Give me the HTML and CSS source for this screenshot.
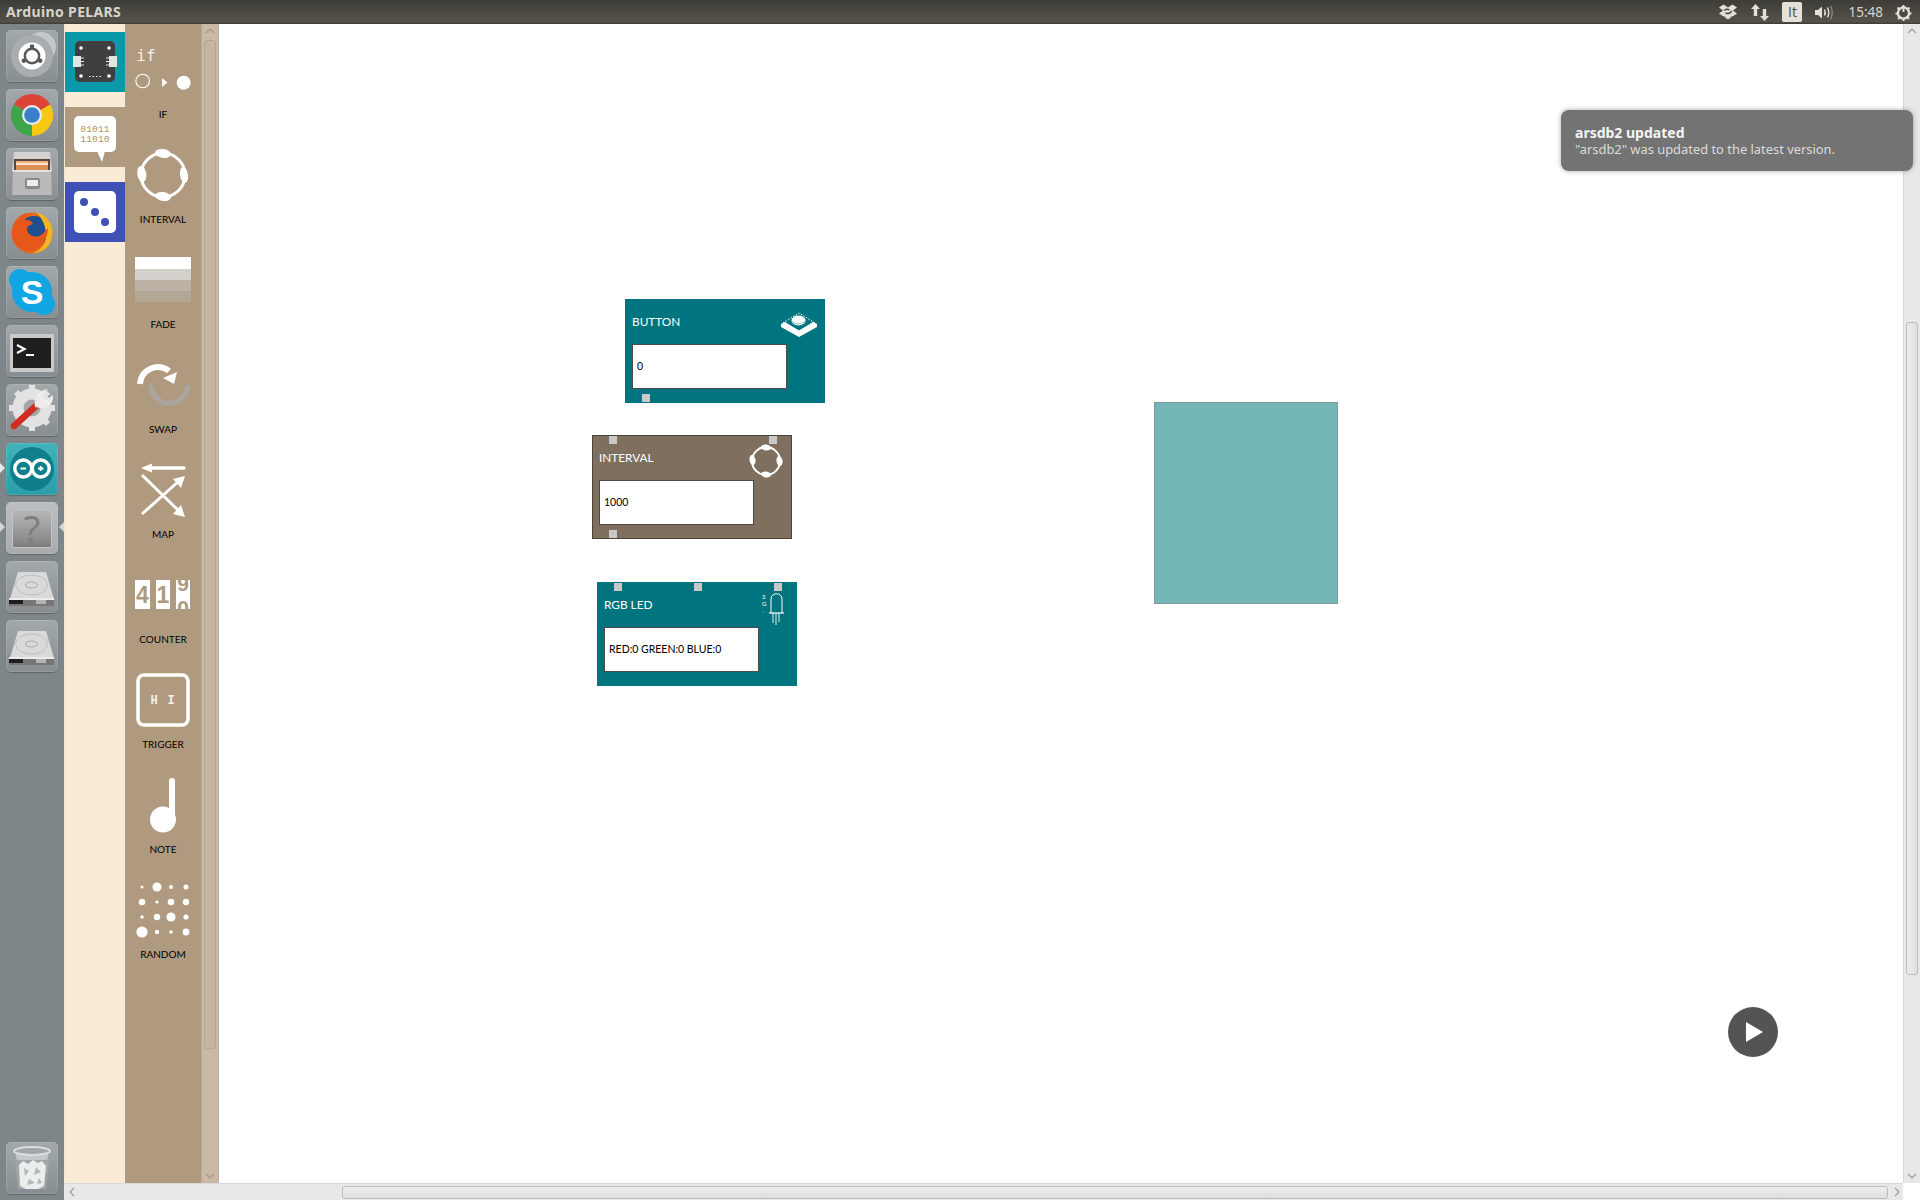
FILE: index.html
```html
<!DOCTYPE html>
<html lang="en">
<head>
<meta charset="utf-8">
<title>Arduino PELARS</title>
<link rel="stylesheet" href="styles.css">
</head>
<body>
<div class="screen">
  <header class="topbar">
    <span class="window-title">Arduino PELARS</span>
    <div class="indicators">
      <svg class="ind ind-dropbox" width="18" height="16" viewBox="0 0 18 16"><path d="M4.5 0.5 9 3.5 13.5 0.5 18 3.5 14 6.5 18 9.5 13.5 12.5 12.5 11.8V13L9 15.5 5.5 13V11.8L4.5 12.5 0 9.5 4 6.5 0 3.5Z" fill="#e4e0d8"/><path d="M5 6.5C7 5 9 5 10.5 6M13 7C11 9.5 8.5 10 6.5 9" stroke="#4a4843" stroke-width="1.4" fill="none"/></svg>
      <svg class="ind ind-net" width="18" height="17" viewBox="0 0 18 17"><path d="M4.5 0 9 5H6.2V12H2.8V5H0Z" fill="#e4e0d8"/><path d="M13.5 17 18 12H15.2V5H11.8V12H9Z" fill="#e4e0d8"/></svg>
      <span class="ind-kbd">It</span>
      <svg class="ind ind-vol" width="20" height="15" viewBox="0 0 20 15"><path d="M0 5H3L7 1.5V13.5L3 10H0Z" fill="#e4e0d8"/><path d="M9.5 4.5Q11 7.5 9.5 10.5" stroke="#e4e0d8" stroke-width="1.5" fill="none"/><path d="M12.5 2.5Q15 7.5 12.5 12.5" stroke="#e4e0d8" stroke-width="1.4" fill="none"/><path d="M15.5 0.8Q19 7.5 15.5 14.2" stroke="#8b8880" stroke-width="1.3" fill="none"/></svg>
      <span class="clock">15:48</span>
      <svg class="ind ind-power" width="17" height="17" viewBox="0 0 17 17"><circle cx="8.5" cy="9" r="5.6" fill="none" stroke="#e4e0d8" stroke-width="2.4"/><path d="M8.5 1V8" stroke="#e4e0d8" stroke-width="2"/><path d="M2.5 3.5 4.2 5.2M14.5 3.5 12.8 5.2M0.5 9.5H2.5M14.5 9.5H16.5M3 15 4.5 13.5M14 15 12.5 13.5M8.5 15V17" stroke="#e4e0d8" stroke-width="2"/></svg>
    </div>
  </header>

  <div class="workspace">
    <nav class="dock">
      <div class="dock-tile">
        <svg viewBox="0 0 52 52" class="dock-icon"><circle cx="26" cy="26" r="21" fill="#a9adb0"/><path d="M26 5A21 21 0 0 1 47 26 15 15 0 0 0 26 5Z" fill="#c4c8ca"/><path d="M26 47A21 21 0 0 1 8 37 20 20 0 0 0 26 47Z" fill="#c4c8ca"/><circle cx="26" cy="26" r="13.500" fill="#fff"/><circle cx="26" cy="26" r="7.200" fill="none" stroke="#555" stroke-width="2.400"/><path d="M26 18V14M19 30 15.500 32.500M33 30 36.500 32.500" stroke="#fff" stroke-width="2.400"/><circle cx="26" cy="16.500" r="2.200" fill="#555"/><circle cx="17.800" cy="30.700" r="2.200" fill="#555"/><circle cx="34.200" cy="30.700" r="2.200" fill="#555"/></svg>
      </div>
      <div class="dock-tile">
        <svg viewBox="0 0 52 52" class="dock-icon"><path d="M26 26 7.800 15.500A21 21 0 0 1 44.200 15.500Z" fill="#dd4438"/><path d="M26 26 44.200 15.500A21 21 0 0 1 26 47Z" fill="#f6c813"/><path d="M26 26 26 47A21 21 0 0 1 7.800 15.500Z" fill="#3ea54a"/><circle cx="26" cy="26" r="10" fill="#e6eef5"/><circle cx="26" cy="26" r="7.800" fill="#3b7fc9"/></svg>
      </div>
      <div class="dock-tile">
        <svg viewBox="0 0 52 52" class="dock-icon"><path d="M8 4H44L46 23H6Z" fill="#d2d2d2"/><rect x="8" y="11" width="36" height="12" fill="#57463a"/><rect x="10" y="13" width="32" height="2" fill="#eab07e"/><rect x="10" y="15" width="32" height="2" fill="#fbe6ce"/><rect x="10" y="17" width="32" height="5" fill="#d98f55"/><path d="M7 22H45L46 47H6Z" fill="#b9b9b9"/><path d="M7 22H45V24H7Z" fill="#e2e2e2"/><rect x="19" y="30" width="15" height="11" rx="2" fill="#8a8a8a"/><rect x="21" y="32" width="11" height="6" fill="#ececec"/></svg>
      </div>
      <div class="dock-tile">
        <svg viewBox="0 0 52 52" class="dock-icon"><circle cx="26" cy="26" r="20.500" fill="#e56a1b"/><circle cx="28" cy="24" r="15" fill="#1e4f8e"/><path d="M30 5C40 8 49 17 46 30 44 41 35 46 26 46.500 35 44 41 36 40 26 39 16 35 10 30 5Z" fill="#f7b521"/><path d="M6 24C7 14 14 6 24 6 20 8 18 11 18 13 22 12 26 14 27 17 24 18 21 19 21 22 21 27 27 31 33 29 38 27 40 23 42 21 42 33 33 45 21 44 11 42 5 34 6 24Z" fill="#e8571a"/></svg>
      </div>
      <div class="dock-tile">
        <svg viewBox="0 0 52 52" class="dock-icon"><circle cx="26" cy="26" r="20" fill="#12a5e4"/><circle cx="14" cy="14" r="11" fill="#12a5e4"/><circle cx="38" cy="38" r="11" fill="#12a5e4"/><text x="26" y="38" text-anchor="middle" class="skype-s">S</text></svg>
      </div>
      <div class="dock-tile">
        <svg viewBox="0 0 52 52" class="dock-icon"><rect x="4" y="9" width="44" height="38" fill="#c9c9c9"/><rect x="7" y="13" width="38" height="30" fill="#1f1f1f"/><path d="M11 20 18.500 24 11 28" fill="none" stroke="#fff" stroke-width="2.200"/><rect x="20" y="29" width="8" height="2" fill="#fff"/></svg>
      </div>
      <div class="dock-tile">
        <svg viewBox="0 0 52 52" class="dock-icon"><circle cx="26" cy="24" r="14" fill="#a2a6a8" stroke="#e2e2e2" stroke-width="11"/><path d="M26 1V8M26 40V47M3 24H10M42 24H49M10 8 15 13M37 35 42 40M42 8 37 13M10 40 15 35" stroke="#e2e2e2" stroke-width="6"/><path d="M8 42 31 21" stroke="#d12c20" stroke-width="6.500" stroke-linecap="round"/><path d="M29 23C27 14 32 6 42 5L37 11 40 16 47 11C48 19 42 25 34 24Z" fill="#ececec"/></svg>
      </div>
      <div class="dock-tile dock-tile-active">
        <svg viewBox="0 0 52 52" class="dock-icon"><circle cx="26" cy="26" r="22" fill="#0f7f8b"/><circle cx="17.300" cy="25.500" r="8.500" fill="none" stroke="#fff" stroke-width="3.400"/><circle cx="34.700" cy="25.500" r="8.500" fill="none" stroke="#fff" stroke-width="3.400"/><path d="M14.500 25.500H20M32 25.500H37.500M34.700 23V28" stroke="#fff" stroke-width="1.800"/></svg>
      </div>
      <div class="dock-tile dock-tile-light">
        <div class="unknown-app">?</div>
      </div>
      <div class="dock-tile">
        <svg viewBox="0 0 52 52" class="dock-icon"><path d="M12 11H40L48 38H4Z" fill="#d8d9d9"/><ellipse cx="25.500" cy="24" rx="16" ry="10" fill="none" stroke="#bdbebe"/><ellipse cx="25.500" cy="24" rx="6" ry="3" fill="none" stroke="#a8a9a9"/><rect x="3" y="37" width="45" height="8" fill="#767676"/><rect x="3" y="37" width="45" height="2" fill="#ececec"/><rect x="3" y="39" width="14" height="4" fill="#1d1d1d"/><rect x="30" y="39" width="10" height="4" fill="#b4b4b4"/></svg>
      </div>
      <div class="dock-tile">
        <svg viewBox="0 0 52 52" class="dock-icon"><path d="M12 11H40L48 38H4Z" fill="#d8d9d9"/><ellipse cx="25.500" cy="24" rx="16" ry="10" fill="none" stroke="#bdbebe"/><ellipse cx="25.500" cy="24" rx="6" ry="3" fill="none" stroke="#a8a9a9"/><rect x="3" y="37" width="45" height="8" fill="#767676"/><rect x="3" y="37" width="45" height="2" fill="#ececec"/><rect x="3" y="39" width="14" height="4" fill="#1d1d1d"/><rect x="30" y="39" width="10" height="4" fill="#b4b4b4"/></svg>
      </div>
      <div class="dock-tile dock-trash">
        <svg viewBox="0 0 52 52" class="dock-icon"><path d="M8 8H44L40 47H12Z" fill="#a1a6a9"/><path d="M10 12H42L41.500 18H10.500Z" fill="#c4c7c9"/><ellipse cx="26" cy="9" rx="18" ry="4" fill="none" stroke="#dcdcdc" stroke-width="2"/><path d="M13 23 17 19 22 22 27 18 32 21 36 19 40 24 38 44 32 47H20L14 44Z" fill="#eceeee"/><path d="M18 26 23 29 19 34ZM30 25 35 30 28 33ZM23 37 29 41 21 43ZM33 36 36 41 31 42Z" fill="#b4b7b7"/></svg>
      </div>
    </nav>
    <span class="pip pip-active"></span>
    <span class="pip pip-urgent-left"></span>
    <span class="pip pip-urgent-right"></span>

    <div class="app">
      <div class="app-main">
        <aside class="categories">
          <div class="category category-teal">
            <svg viewBox="0 0 60 60" width="60" height="60"><rect x="10" y="9" width="40" height="41" rx="5" fill="#3f3f3f"/><circle cx="16" cy="16" r="1.800" fill="#fff"/><circle cx="44" cy="16" r="1.800" fill="#fff"/><circle cx="16" cy="44" r="1.800" fill="#fff"/><circle cx="44" cy="44" r="1.800" fill="#fff"/><rect x="8" y="24" width="8" height="11" fill="#e4e4e4"/><rect x="44" y="24" width="8" height="11" fill="#e4e4e4"/><path d="M16 26H19M16 29.500H19M16 33H19M41 26H44M41 29.500H44M41 33H44" stroke="#e4e4e4"/><path d="M24 44.500H36" stroke="#fff" stroke-dasharray="1.500 2"/></svg>
          </div>
          <div class="category category-tan">
            <svg viewBox="0 0 60 60" width="60" height="60"><rect x="9" y="9" width="42" height="36" rx="5" fill="#fff"/><path d="M32 44H40L37 55Z" fill="#fff"/><text x="30" y="25" text-anchor="middle" class="bits">01011</text><text x="30" y="34.500" text-anchor="middle" class="bits">11010</text></svg>
          </div>
          <div class="category category-blue">
            <svg viewBox="0 0 60 60" width="60" height="60"><rect x="9" y="9" width="42" height="42" rx="5" fill="#fff"/><circle cx="19" cy="20" r="4" fill="#3f51b5"/><circle cx="30" cy="30" r="4" fill="#3f51b5"/><circle cx="40" cy="40" r="4" fill="#3f51b5"/></svg>
          </div>
        </aside>

        <aside class="tools">
          <div class="tool">
            <svg class="tool-icon" viewBox="0 0 76 80"><text x="21" y="36" text-anchor="middle" class="if-text">if</text><circle cx="17.700" cy="56" r="6.800" fill="none" stroke="#fff" stroke-width="1.100"/><path d="M37 53 42.500 57.500 37 62Z" fill="#fff"/><circle cx="58.700" cy="57.700" r="7" fill="#fff"/></svg>
            <span class="tool-label">IF</span>
          </div>
          <div class="tool">
            <svg class="tool-icon" viewBox="0 0 76 80"><circle cx="38" cy="45" r="22" fill="none" stroke="#fff" stroke-width="3"/><ellipse cx="38" cy="23.500" rx="8" ry="4.500" fill="#fff" transform="rotate(8 38 23.500)"/><ellipse cx="38" cy="66.500" rx="8" ry="4.500" fill="#fff" transform="rotate(8 38 66.500)"/><ellipse cx="59" cy="45" rx="4" ry="8" fill="#fff" transform="rotate(-8 59 45)"/><ellipse cx="16.800" cy="44" rx="4.500" ry="8" fill="#fff" transform="rotate(-8 16.800 44)"/></svg>
            <span class="tool-label">INTERVAL</span>
          </div>
          <div class="tool">
            <svg class="tool-icon" viewBox="0 0 76 80"><rect x="10" y="22" width="56" height="12" fill="#fff"/><rect x="10" y="34" width="56" height="11" fill="#d3cfca"/><rect x="10" y="45" width="56" height="11" fill="#bcb2a6"/><rect x="10" y="56" width="56" height="11" fill="#b5a795"/></svg>
            <span class="tool-label">FADE</span>
          </div>
          <div class="tool">
            <svg class="tool-icon" viewBox="0 0 76 80"><path d="M26 45A18 18 0 0 0 62.500 45" fill="none" stroke="#a9a6a1" stroke-width="5"/><path d="M15 44A18 18 0 0 1 44 31" fill="none" stroke="#fff" stroke-width="6"/><path d="M38 38 52 32 49 44Z" fill="#fff"/></svg>
            <span class="tool-label">SWAP</span>
          </div>
          <div class="tool">
            <svg class="tool-icon" viewBox="0 0 76 80"><path d="M59 23H25" stroke="#fff" stroke-width="3.400" stroke-linecap="round"/><path d="M16 23 27 18.500V27.500Z" fill="#fff"/><path d="M17 69 54 36" stroke="#fff" stroke-width="3"/><path d="M60 31 56 43 48 34Z" fill="#fff"/><path d="M17 30 54 66" stroke="#fff" stroke-width="3"/><path d="M60 72 48 69 56 60Z" fill="#fff"/></svg>
            <span class="tool-label">MAP</span>
          </div>
          <div class="tool">
            <svg class="tool-icon" viewBox="0 0 76 80"><defs><clipPath id="roll"><rect x="51" y="30" width="14" height="29"/></clipPath></defs><rect x="10" y="30" width="15" height="29" fill="#fff"/><text x="17.500" y="53" text-anchor="middle" class="digit">4</text><rect x="31" y="30" width="14" height="29" fill="#fff"/><text x="38" y="53" text-anchor="middle" class="digit">1</text><rect x="51" y="30" width="14" height="29" fill="#fff"/><g clip-path="url(#roll)"><text x="58" y="41" text-anchor="middle" class="digit digit-roll">9</text><text x="58" y="65" text-anchor="middle" class="digit digit-roll">0</text></g></svg>
            <span class="tool-label">COUNTER</span>
          </div>
          <div class="tool">
            <svg class="tool-icon" viewBox="0 0 76 80"><rect x="13" y="20" width="50" height="50" rx="6" fill="none" stroke="#fff" stroke-width="3.500"/><text x="29" y="49" text-anchor="middle" class="hi-text">H</text><text x="46" y="49" text-anchor="middle" class="hi-text">I</text></svg>
            <span class="tool-label">TRIGGER</span>
          </div>
          <div class="tool">
            <svg class="tool-icon" viewBox="0 0 76 80"><rect x="44" y="18" width="6" height="42" rx="3" fill="#fff"/><ellipse cx="38" cy="59.500" rx="13" ry="13" fill="#fff"/></svg>
            <span class="tool-label">NOTE</span>
          </div>
          <div class="tool">
            <svg class="tool-icon" viewBox="0 0 76 80" fill="#fff"><circle cx="17" cy="22" r="1.500"/><circle cx="32" cy="22" r="4.500"/><circle cx="46" cy="22" r="2"/><circle cx="61" cy="22" r="2.500"/><circle cx="17" cy="37" r="3.300"/><circle cx="32" cy="37" r="1.600"/><circle cx="46" cy="37" r="3.300"/><circle cx="61" cy="37" r="3.200"/><circle cx="17" cy="52" r="1.800"/><circle cx="32" cy="52" r="3.200"/><circle cx="46" cy="52" r="4.600"/><circle cx="61" cy="52" r="2.600"/><circle cx="17" cy="67" r="5.600"/><circle cx="32" cy="67" r="2.200"/><circle cx="46" cy="67" r="1.800"/><circle cx="61" cy="67" r="3.400"/></svg>
            <span class="tool-label">RANDOM</span>
          </div>
        </aside>

        <div class="vbar vbar-tan">
          <svg class="chevron" width="10" height="6" viewBox="0 0 10 6"><path d="M1 5 5 1 9 5" fill="none" stroke="#a99984" stroke-width="1.200"/></svg>
          <div class="thumb thumb-tan"></div>
          <svg class="chevron" width="10" height="6" viewBox="0 0 10 6"><path d="M1 1 5 5 9 1" fill="none" stroke="#a99984" stroke-width="1.200"/></svg>
        </div>

        <main class="canvas">
          <section class="node node-button node-teal">
            <div class="node-title">BUTTON</div>
            <div class="node-value">0</div>
            <span class="port port-button-out"></span>
            <svg class="node-icon icon-button" width="36" height="25" viewBox="0 0 36 25"><path d="M2 11 18 1 34 11 18 19Z" fill="none" stroke="#fff" stroke-width="1" stroke-dasharray="1.500 1.500"/><path d="M0 12 4 10 18 18.500 32 10 36 12V15L18 25 0 15Z" fill="#fff"/><ellipse cx="17.500" cy="8.500" rx="7" ry="5" fill="#fff"/><path d="M11 9.500Q17.500 14.500 24 9.500" stroke="#8fbcc0" fill="none"/></svg>
          </section>
          <section class="node node-interval node-brown">
            <div class="node-title">INTERVAL</div>
            <div class="node-value">1000</div>
            <span class="port port-in-a"></span>
            <span class="port port-in-b"></span>
            <span class="port port-out-a"></span>
            <svg class="node-icon icon-interval" width="34" height="34" viewBox="0 0 34 34"><circle cx="17" cy="17" r="14" fill="none" stroke="#fff" stroke-width="2"/><ellipse cx="17" cy="3.500" rx="5" ry="3" fill="#fff" transform="rotate(8 17 3.500)"/><ellipse cx="17" cy="30.500" rx="5" ry="3" fill="#fff" transform="rotate(8 17 30.500)"/><ellipse cx="30.500" cy="17" rx="3" ry="5" fill="#fff" transform="rotate(-8 30.500 17)"/><ellipse cx="3.500" cy="16" rx="3" ry="5" fill="#fff" transform="rotate(-8 3.500 16)"/></svg>
          </section>
          <section class="node node-rgb node-teal">
            <div class="node-title">RGB LED</div>
            <div class="node-value">RED:0 GREEN:0 BLUE:0</div>
            <span class="port port-r"></span>
            <span class="port port-g"></span>
            <span class="port port-b"></span>
            <svg class="node-icon icon-led" width="24" height="34" viewBox="0 0 24 34"><path d="M11 21V7C11 0 22 0 22 7V21" fill="none" stroke="#fff" stroke-width="1"/><path d="M9 21H24" stroke="#fff" stroke-width="1.200"/><path d="M13 21V31M16 21V33M19 21V30" stroke="#fff" stroke-width="0.900"/><text x="2" y="7" class="led-marks">3</text><text x="2" y="14" class="led-marks">G</text><text x="2" y="21" class="led-marks">.</text></svg>
          </section>
          <div class="preview-box"></div>
          <button class="play" type="button" aria-label="Run"><svg width="18" height="20" viewBox="0 0 18 20"><path d="M0 0 17 10 0 20Z" fill="#fff"/></svg></button>
        </main>

        <div class="vbar vbar-grey">
          <svg class="chevron" width="10" height="6" viewBox="0 0 10 6"><path d="M1 5 5 1 9 5" fill="none" stroke="#9c9c9c" stroke-width="1.200"/></svg>
          <div class="thumb thumb-grey"></div>
          <svg class="chevron" width="10" height="6" viewBox="0 0 10 6"><path d="M1 1 5 5 9 1" fill="none" stroke="#9c9c9c" stroke-width="1.200"/></svg>
        </div>
      </div>
      <div class="hbar">
        <svg class="chevron-h" width="6" height="10" viewBox="0 0 6 10"><path d="M5 1 1 5 5 9" fill="none" stroke="#9c9c9c" stroke-width="1.200"/></svg>
        <div class="hthumb"></div>
        <svg class="chevron-h" width="6" height="10" viewBox="0 0 6 10"><path d="M1 1 5 5 1 9" fill="none" stroke="#9c9c9c" stroke-width="1.200"/></svg>
        <div class="hcorner"></div>
      </div>
    </div>
  </div>

  <aside class="notification">
    <div class="note-title">arsdb2 updated</div>
    <div class="note-body">"arsdb2" was updated to the latest version.</div>
  </aside>
</div>
</body>
</html>
```
FILE: styles.css
```css
* { box-sizing: border-box; }
html, body { margin: 0; height: 100%; overflow: hidden; background: #fff; }
.screen { position: relative; display: flex; flex-direction: column; width: 1920px; height: 1200px; font-family: "Lato", "Noto Sans", sans-serif; }

/* top panel */
.topbar { flex: 0 0 24px; display: flex; align-items: center; justify-content: space-between; background: linear-gradient(#3d3c37, #55524a 90%, #3b3a36); color: #dfdbd2; }
.window-title { margin-left: 6px; font: 700 14px/24px "Noto Sans", sans-serif; letter-spacing: 0.35px; color: #d8d4cb; }
.indicators { display: flex; align-items: center; height: 24px; padding-right: 8px; }
.ind { display: block; flex: none; }
.ind-dropbox { margin-right: 14px; }
.ind-net { margin-right: 13px; }
.ind-kbd { width: 20px; height: 20px; border-radius: 2px; background: #e6e1d8; color: #4b4943; font: 400 14px/20px "Open Sans", sans-serif; text-align: center; margin-right: 13px; }
.ind-vol { margin-right: 13px; }
.clock { font: 400 13.5px/24px "Noto Sans", sans-serif; color: #d8d4cb; margin-right: 12px; }

/* launcher */
.workspace { flex: 1; display: flex; min-height: 0; position: relative; }
.dock { flex: 0 0 64px; display: flex; flex-direction: column; gap: 7px; padding: 6px 0 6px 6px; background: #7f868a; }
.dock-tile { flex: 0 0 52px; width: 52px; height: 52px; border-radius: 5px; background: linear-gradient(#a3a8ab, #878d90); box-shadow: inset 0 0 0 1px rgba(255,255,255,.12), 0 1px 1px rgba(0,0,0,.25); }
.dock-tile-active { background: linear-gradient(#42b3bb, #2a9ea8); }
.dock-tile-light { display: flex; align-items: center; justify-content: center; background: linear-gradient(#bcbfc1, #a7abad); }
.dock-trash { margin-top: auto; }
.dock-icon { display: block; width: 52px; height: 52px; }
.unknown-app { width: 40px; height: 39px; border-radius: 2px; border: 1px solid #c4c4c4; background: linear-gradient(#b8b8b8, #8a8a8a 85%, #787878); color: #7f7f7f; font: 400 38px/37px "Noto Sans", sans-serif; text-align: center; }
.skype-s { font: 700 34px "Liberation Sans", sans-serif; fill: #fff; }
.pip { position: absolute; width: 0; height: 0; border-top: 5px solid transparent; border-bottom: 5px solid transparent; }
.pip-active { left: 0; top: 439px; border-left: 5px solid #e6e8e8; }
.pip-urgent-left { left: 0; top: 498px; border-left: 5px solid #d3d5d5; }
.pip-urgent-right { left: 59px; top: 498px; border-right: 5px solid #d3d5d5; }

/* app window */
.app { flex: 1; min-width: 0; display: flex; flex-direction: column; border-left: 1px solid #eee6d8; }
.app-main { flex: 1; display: flex; min-height: 0; }
.categories { flex: 0 0 60px; display: flex; flex-direction: column; gap: 15px; padding-top: 8px; background: #faebd7; }
.category { width: 60px; height: 60px; }
.category svg { display: block; }
.category-teal { background: #0a99a8; }
.category-tan { background: #b09a7f; }
.category-blue { background: #3f51b5; }
.bits { font: 400 9.500px "Liberation Mono", monospace; fill: #a99478; letter-spacing: .2px; }

.tools { flex: 0 0 76px; display: flex; flex-direction: column; padding-top: 1px; background: #b09a7f; }
.tool { flex: 0 0 105px; display: flex; flex-direction: column; align-items: center; }
.tool-icon { display: block; width: 76px; height: 80px; }
.tool-label { font: 400 10px/18px "Lato", sans-serif; color: #000; }
.if-text { font: 400 16px "DejaVu Sans Mono", monospace; fill: #f2ede6; }
.digit { font: 700 23px "Liberation Sans", sans-serif; fill: #b09a7f; }
.digit-roll { font-size: 21px; }
.hi-text { font: 700 12px "Liberation Mono", monospace; fill: #f5f0ea; }

/* scrollbars */
.vbar { flex: 0 0 18px; display: flex; flex-direction: column; align-items: center; padding: 4px 0 4px; }
.vbar-tan { background: #c9b9a6; border-left: 1px solid #bba994; border-right: 1px solid #bdac99; }
.vbar-grey { flex: 0 0 17px; background: #e8e8e8; border-left: 1px solid #d8d8d8; }
.thumb { flex: 1; width: 12px; border-radius: 3px; }
.chevron, .chevron-h { display: block; flex: none; }
.thumb-tan { margin: 6px 0 124px; background: #c6b5a1; border: 1px solid #b6a48f; }
.thumb-grey { margin: 288px 0 198px; background: linear-gradient(90deg, #ececec, #e0e0e0); border: 1px solid #bbb; }
.hbar { flex: 0 0 17px; display: flex; align-items: center; padding-left: 4px; background: #e8e8e8; border-top: 1px solid #d8d8d8; }
.hthumb { margin: 0 6px 0 267px; width: 1546px; height: 13px; border-radius: 3px; background: linear-gradient(#ececec, #e0e0e0); border: 1px solid #bbb; }
.hcorner { margin-left: auto; align-self: stretch; width: 17px; margin-top: -1px; background: #fff; }

/* canvas */
.canvas { flex: 1; position: relative; min-width: 0; background: #fff; }
.node { position: absolute; width: 200px; height: 104px; padding: 0 6px; border: 1px solid rgba(60,50,40,.6); }
.node-teal { background: #00747f; border-color: #00747f; }
.node-brown { background: #7f6f5e; border-color: #4d4338; }
.node-button { left: 406px; top: 275px; }
.node-interval { left: 373px; top: 411px; }
.node-rgb { left: 378px; top: 558px; }
.node-title { height: 44px; padding-top: 9px; font: 400 11.800px/26px "Lato", sans-serif; color: #fff; }
.node-value { width: 155px; height: 45px; padding-left: 4px; background: #fff; border: 1px solid #4c4a46; font: 400 10.500px/43px "Lato", sans-serif; color: #000; }
.port { position: absolute; width: 8px; height: 8px; background: #c9c9c9; }
.port-button-out { left: 16px; bottom: 0; }
.port-in-a { left: 16px; top: 0; }
.port-in-b { left: 176px; top: 0; }
.port-out-a { left: 16px; bottom: 0; }
.port-r { left: 16px; top: 0; }
.port-g { left: 96px; top: 0; }
.port-b { left: 176px; top: 0; }
.node-icon { position: absolute; display: block; }
.icon-button { left: 155px; top: 12px; }
.icon-interval { left: 156px; top: 8px; }
.icon-led { left: 162px; top: 9px; }
.led-marks { font: 400 6px "Liberation Sans", sans-serif; fill: #fff; }
.preview-box { position: absolute; left: 935px; top: 378px; width: 184px; height: 202px; background: #74b6b5; border: 1px solid #7f9a99; }
.play { position: absolute; left: 1509px; top: 983px; display: flex; align-items: center; justify-content: center; width: 50px; height: 50px; padding: 0 0 0 4px; border: 0; border-radius: 50%; background: #545454; }

/* notification */
.notification { position: absolute; left: 1561px; top: 110px; width: 352px; height: 61px; padding: 15px 14px 0; border-radius: 8px; background: #737373; box-shadow: 0 0 5px rgba(0,0,0,.35); }
.note-title { font: 700 14px/16px "Noto Sans", sans-serif; color: #f4f4f4; }
.note-body { font: 400 12.900px/17px "Noto Sans", sans-serif; color: #dcdcdc; }
```
